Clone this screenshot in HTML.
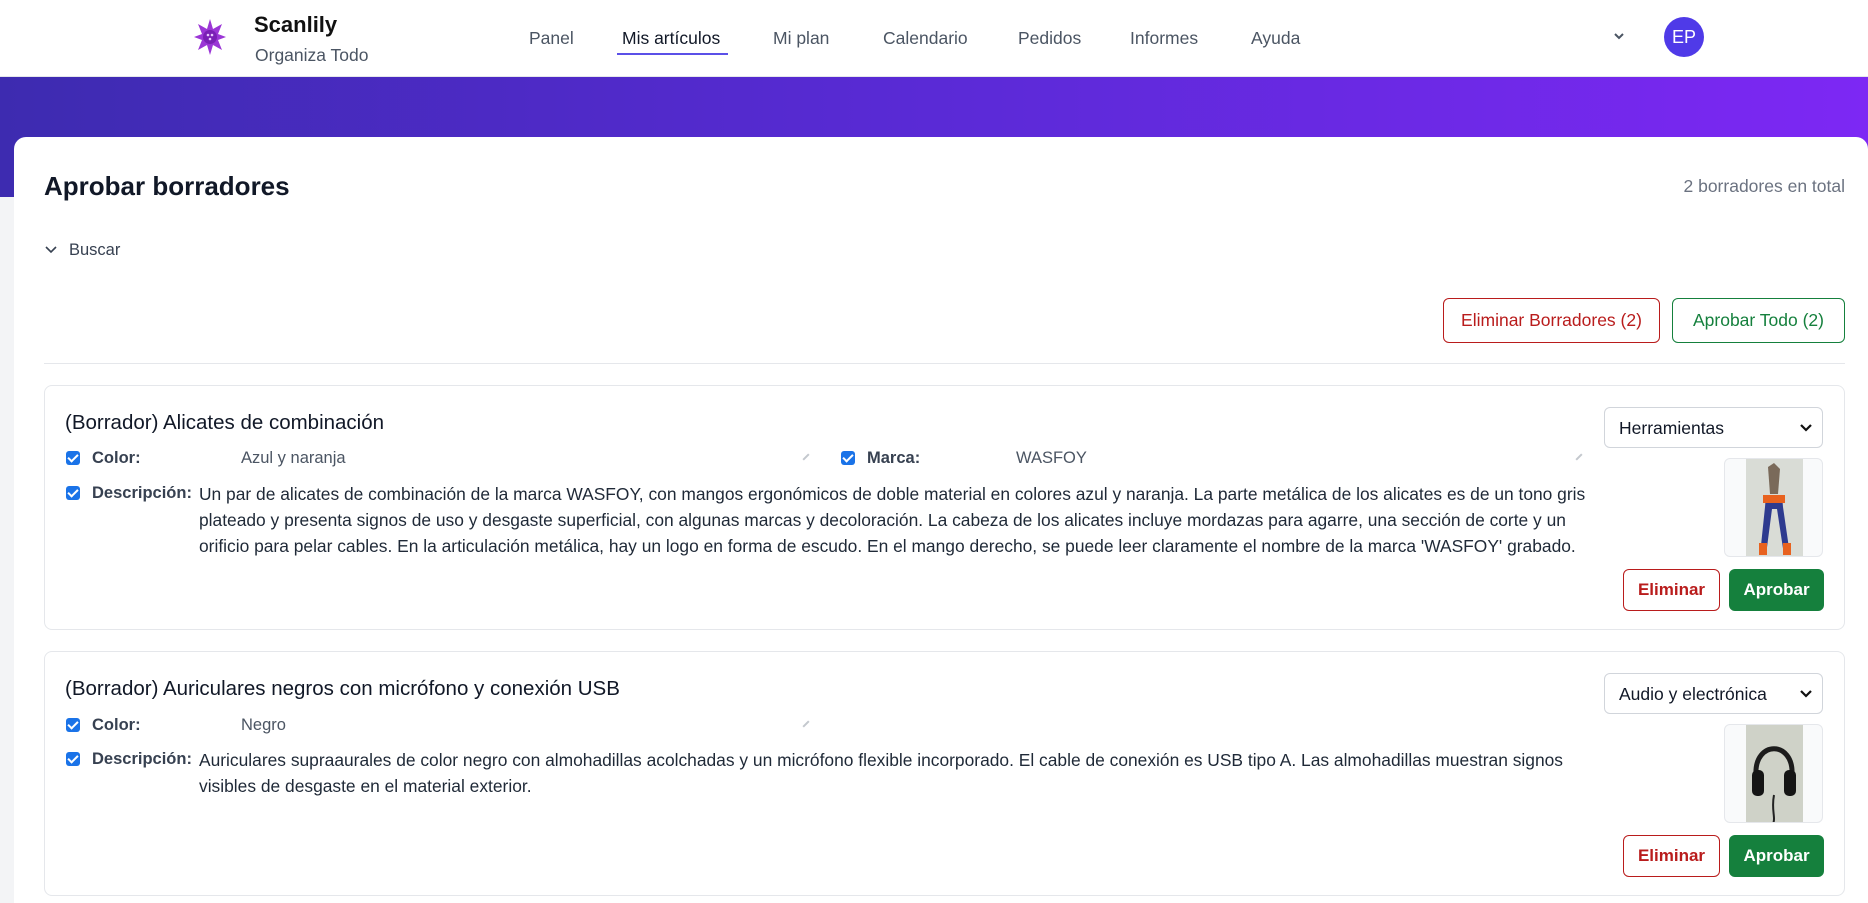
<!DOCTYPE html>
<html style="width:1868px;height:903px;overflow:hidden"><head><meta charset="utf-8">
<style>
*{box-sizing:border-box;margin:0;padding:0}
body{width:1868px;height:903px;overflow:hidden;background:#f3f4f6;font-family:"Liberation Sans",sans-serif;position:relative;color:#1f2937}
.hdr{position:absolute;left:0;top:0;width:1868px;height:77px;background:#fff;border-bottom:1px solid #e5e7eb}
.band{position:absolute;left:0;top:77px;width:1868px;height:120px;background:linear-gradient(90deg,#3d2bb0 0%,#5a2ad6 50%,#7d28f4 100%)}
.abs{position:absolute;white-space:nowrap}
.nav{position:absolute;top:28px;font-size:17.5px;color:#4b5563}
.card{position:absolute;left:14px;top:137px;width:1854px;height:766px;background:#fff;border-radius:12px 12px 0 0}
.item{position:absolute;left:44px;width:1801px;border:1px solid #e5e7eb;border-radius:8px;background:#fff}
.cb{position:absolute;width:14px;height:14px;background:#1a73e8;border-radius:3px}
.cb::after{content:"";position:absolute;left:4px;top:1px;width:4px;height:8px;border:solid #fff;border-width:0 2px 2px 0;transform:rotate(45deg)}
.lbl{position:absolute;font-size:16.5px;font-weight:bold;color:#374151;white-space:nowrap}
.val{position:absolute;font-size:16.5px;color:#4b5563;white-space:nowrap}
.desc{position:absolute;font-size:17.4px;line-height:26px;color:#1f2937;white-space:nowrap}
.pen{position:absolute;width:8px;height:2px;background:#c4c8ce;transform:rotate(-45deg)}
.sel{position:absolute;width:219px;height:41px;border:1px solid #d1d5db;border-radius:6px;font-size:17.5px;color:#111827;padding:10px 0 0 14px}
.sel svg{position:absolute;right:10px;top:15px}
.imgb{position:absolute;width:99px;height:99px;border:1px solid #e5e7eb;border-radius:6px;background:#f9fafb;overflow:hidden}
.bdel{position:absolute;width:97px;height:42px;border:1px solid #b91c1c;border-radius:6px;color:#b91c1c;font-weight:bold;font-size:17px;text-align:center;line-height:40px}
.bok{position:absolute;width:95px;height:42px;background:#15803d;border-radius:6px;color:#fff;font-weight:bold;font-size:17px;text-align:center;line-height:42px}
</style></head><body>
<div class="hdr">
  <svg class="abs" style="left:193px;top:18px" width="34" height="38" viewBox="0 0 34 38">
    <polygon points="17,1 20,11 29,6 25,16 33,19 25,22 29,32 20,27 17,37 14,27 5,32 9,22 1,19 9,16 5,6 14,11" fill="#9b36d6"/>
    <circle cx="17" cy="19" r="7" fill="#7a1fb5"/><circle cx="15" cy="17" r="1.3" fill="#e9c6ff"/><circle cx="19" cy="17" r="1.3" fill="#e9c6ff"/><circle cx="17" cy="21" r="1.3" fill="#e9c6ff"/>
  </svg>
  <div class="abs" style="left:254px;top:12px;font-size:22px;font-weight:bold;color:#111">Scanlily</div>
  <div class="abs" style="left:255px;top:45px;font-size:17.5px;color:#4b5563">Organiza Todo</div>
  <div class="nav" style="left:529px">Panel</div>
  <div class="nav" style="left:622px;color:#111827">Mis artículos</div>
  <div class="abs" style="left:617px;top:53px;width:111px;height:2px;background:#5b50e8"></div>
  <div class="nav" style="left:773px">Mi plan</div>
  <div class="nav" style="left:883px">Calendario</div>
  <div class="nav" style="left:1018px">Pedidos</div>
  <div class="nav" style="left:1130px">Informes</div>
  <div class="nav" style="left:1251px">Ayuda</div>
  <svg class="abs" style="left:1613px;top:32px" width="12" height="8" viewBox="0 0 12 8"><path d="M2 2l4 4 4-4" stroke="#4b5563" stroke-width="2" fill="none"/></svg>
  <div class="abs" style="left:1664px;top:17px;width:40px;height:40px;border-radius:50%;background:#4f3ae8;color:#fff;font-size:18px;text-align:center;line-height:40px">EP</div>
</div>
<div class="band"></div>
<div class="card"></div>
<div class="abs" style="left:44px;top:171px;font-size:26px;font-weight:bold;color:#111827">Aprobar borradores</div>
<div class="abs" style="right:23px;top:176px;font-size:17.5px;color:#6b7280">2 borradores en total</div>
<svg class="abs" style="left:45px;top:245px" width="12" height="9" viewBox="0 0 12 9"><path d="M1 2l5 5 5-5" stroke="#374151" stroke-width="1.6" fill="none"/></svg>
<div class="abs" style="left:69px;top:241px;font-size:16.5px;color:#374151">Buscar</div>
<div class="abs" style="left:1443px;top:298px;width:217px;height:45px;border:1px solid #b91c1c;border-radius:6px;color:#b91c1c;font-size:17.5px;text-align:center;line-height:43px">Eliminar Borradores (2)</div>
<div class="abs" style="left:1672px;top:298px;width:173px;height:45px;border:1px solid #15803d;border-radius:6px;color:#15803d;font-size:17.5px;text-align:center;line-height:43px">Aprobar Todo (2)</div>
<div class="abs" style="left:44px;top:363px;width:1801px;height:1px;background:#e5e7eb"></div>

<div class="item" style="top:385px;height:245px">
  <div class="abs" style="left:20px;top:25px;font-size:20.5px;color:#111827">(Borrador) Alicates de combinación</div>
  <div class="cb" style="left:21px;top:65px"></div>
  <div class="lbl" style="left:47px;top:63px">Color:</div>
  <div class="val" style="left:196px;top:63px">Azul y naranja</div>
  <div class="pen" style="left:757px;top:70px"></div>
  <div class="cb" style="left:796px;top:65px"></div>
  <div class="lbl" style="left:822px;top:63px">Marca:</div>
  <div class="val" style="left:971px;top:63px">WASFOY</div>
  <div class="pen" style="left:1530px;top:70px"></div>
  <div class="cb" style="left:21px;top:100px"></div>
  <div class="lbl" style="left:47px;top:98px">Descripción:</div>
  <div class="desc" style="left:154px;top:95px">Un par de alicates de combinación de la marca WASFOY, con mangos ergonómicos de doble material en colores azul y naranja. La parte metálica de los alicates es de un tono gris<br>plateado y presenta signos de uso y desgaste superficial, con algunas marcas y decoloración. La cabeza de los alicates incluye mordazas para agarre, una sección de corte y un<br>orificio para pelar cables. En la articulación metálica, hay un logo en forma de escudo. En el mango derecho, se puede leer claramente el nombre de la marca 'WASFOY' grabado.</div>
  <div class="sel" style="left:1559px;top:21px">Herramientas<svg width="12" height="9" viewBox="0 0 12 9"><path d="M1 2l5 5 5-5" stroke="#111" stroke-width="2.2" fill="none"/></svg></div>
  <div class="imgb" style="left:1679px;top:72px">
    <svg style="position:absolute;left:21px;top:0" width="57" height="99" viewBox="0 0 57 99">
      <rect width="57" height="99" fill="#d9dcd6"/>
      <path d="M22 8 L28 4 L34 10 L32 35 L24 35 Z" fill="#7a6a5a"/>
      <path d="M20 36 L36 36 L37 48 L44 96 L38 96 L31 50 L26 50 L20 96 L14 96 L19 48 Z" fill="#2e3b8f"/>
      <rect x="17" y="36" width="22" height="8" fill="#e8621f"/>
      <rect x="13" y="84" width="8" height="12" fill="#e8621f"/><rect x="37" y="84" width="8" height="12" fill="#e8621f"/>
    </svg>
  </div>
  <div class="bdel" style="left:1578px;top:183px">Eliminar</div>
  <div class="bok" style="left:1684px;top:183px">Aprobar</div>
</div>

<div class="item" style="top:651px;height:245px">
  <div class="abs" style="left:20px;top:25px;font-size:20.5px;color:#111827">(Borrador) Auriculares negros con micrófono y conexión USB</div>
  <div class="cb" style="left:21px;top:66px"></div>
  <div class="lbl" style="left:47px;top:64px">Color:</div>
  <div class="val" style="left:196px;top:64px">Negro</div>
  <div class="pen" style="left:757px;top:71px"></div>
  <div class="cb" style="left:21px;top:100px"></div>
  <div class="lbl" style="left:47px;top:98px">Descripción:</div>
  <div class="desc" style="left:154px;top:95px">Auriculares supraaurales de color negro con almohadillas acolchadas y un micrófono flexible incorporado. El cable de conexión es USB tipo A. Las almohadillas muestran signos<br>visibles de desgaste en el material exterior.</div>
  <div class="sel" style="left:1559px;top:21px">Audio y electrónica<svg width="12" height="9" viewBox="0 0 12 9"><path d="M1 2l5 5 5-5" stroke="#111" stroke-width="2.2" fill="none"/></svg></div>
  <div class="imgb" style="left:1679px;top:72px">
    <svg style="position:absolute;left:21px;top:0" width="57" height="99" viewBox="0 0 57 99">
      <rect width="57" height="99" fill="#cfd2c8"/>
      <path d="M10 50 C8 15 48 15 46 50" stroke="#1c1c1c" stroke-width="5" fill="none"/>
      <rect x="6" y="45" width="12" height="26" rx="5" fill="#151515"/><rect x="38" y="45" width="12" height="26" rx="5" fill="#151515"/>
      <path d="M28 70 C25 85 30 92 27 99" stroke="#222" stroke-width="2" fill="none"/>
    </svg>
  </div>
  <div class="bdel" style="left:1578px;top:183px">Eliminar</div>
  <div class="bok" style="left:1684px;top:183px">Aprobar</div>
</div>
</body></html>
